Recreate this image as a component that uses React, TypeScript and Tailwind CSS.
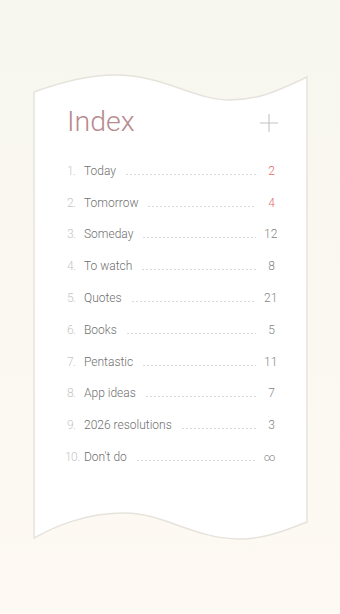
const items = [
  { label: 'Today', count: '2', red: true },
  { label: 'Tomorrow', count: '4', red: true },
  { label: 'Someday', count: '12' },
  { label: 'To watch', count: '8' },
  { label: 'Quotes', count: '21' },
  { label: 'Books', count: '5' },
  { label: 'Pentastic', count: '11' },
  { label: 'App ideas', count: '7' },
  { label: '2026 resolutions', count: '3' },
  { label: "Don't do", count: '∞' },
];

function Paper() {
  return (
    <svg className="absolute inset-0 h-full w-full overflow-visible" viewBox="0 0 273 464" preserveAspectRatio="none">
      <path
        d="M0 17 C 30 6, 55 0, 81 0 C 130 0, 160 25, 196 25 C 230 25, 255 10, 273 2 L 273 447 C 250 456, 230 464, 206 464 C 160 464, 130 438, 91 438 C 50 438, 20 452, 0 463 Z"
        fill="#ffffff"
        stroke="#e6e3dc"
        strokeWidth="1.5"
      />
    </svg>
  );
}

export default function App() {
  return (
    <div className="h-[614px] w-full bg-gradient-to-b from-[#f7f7ef] to-[#fef9f3] pt-[75px] pl-[34px] font-['Roboto',sans-serif]">
      <div className="relative h-[464px] w-[273px]">
        <Paper />
        <div className="relative pt-[29px] pl-[33px] pr-[32px]">
          <div className="flex h-[36px] items-center justify-between">
            <h1 className="text-[28.5px] font-light leading-[36px] text-[#b98a8e]">Index</h1>
            <svg width="18" height="18" viewBox="0 0 18 18" className="mr-[-3px] mt-[2px]">
              <path d="M9 0 V18 M0 9 H18" stroke="#c4c4c4" strokeWidth="1.1" />
            </svg>
          </div>
          <ul className="mt-[15px]">
            {items.map((item, i) => (
              <li key={i} className="flex h-[31.8px] items-center text-[12px] font-light leading-none">
                <span className={`w-[17px] shrink-0 whitespace-nowrap tracking-[-0.6px] text-[#c6c6c6] ${i === 9 ? '-ml-[2px] mr-[2px]' : ''}`}>
                  {i + 1}.
                </span>
                <span className="shrink-0 text-[#707070]">{item.label}</span>
                <span className="ml-[10px] mr-[8px] mt-[7px] h-px flex-1 bg-[linear-gradient(to_right,#dadada_50%,transparent_50%)] bg-[length:4px_1px] bg-repeat-x" />
                <span className={`w-[11px] shrink-0 text-right ${item.red ? 'text-[#e36b66]' : 'text-[#858585]'} ${i === 9 ? 'text-[11px]' : ''}`}>
                  {item.count}
                </span>
              </li>
            ))}
          </ul>
        </div>
      </div>
    </div>
  );
}
